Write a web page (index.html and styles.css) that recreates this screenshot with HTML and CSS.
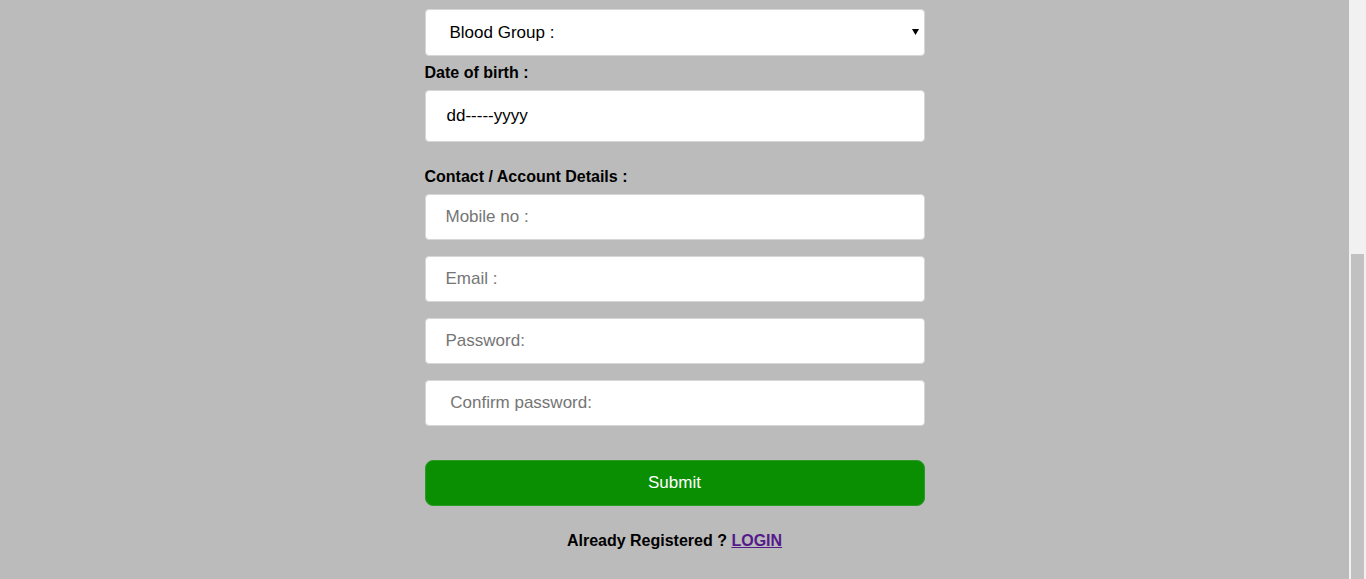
FILE: index.html
```html
<!DOCTYPE html>
<html>
<head>
<meta charset="utf-8">
<title>Register</title>
<link rel="stylesheet" href="styles.css">
</head>
<body>
<div class="page">
  <main class="main">
    <form class="form">
      <div class="select-wrap">
        <div class="select">Blood Group :</div>
        <svg class="caret" width="7" height="6" viewBox="0 0 7 6"><path d="M0 0H7L3.5 6Z" fill="#000"/></svg>
      </div>
      <label class="label label-dob">Date of birth :</label>
      <input class="field field-date" type="text" value="dd-----yyyy">
      <label class="label label-contact">Contact / Account Details :</label>
      <div class="fields">
        <input class="field" type="text" placeholder="Mobile no :">
        <input class="field" type="text" placeholder="Email :">
        <input class="field" type="text" placeholder="Password:">
        <input class="field" type="text" placeholder=" Confirm password:">
      </div>
      <button class="submit" type="button">Submit</button>
      <p class="login">Already Registered ? <a href="#" class="login-link">LOGIN</a></p>
    </form>
  </main>
  <div class="scrollbar"><div class="thumb"></div></div>
</div>
</body>
</html>
```
FILE: styles.css
```css
html, body {
  margin: 0;
  padding: 0;
  height: 579px;
  overflow: hidden;
}
body {
  font-family: "Liberation Sans", Arial, sans-serif;
  background: #bbbbbb;
}
.page {
  display: flex;
  height: 579px;
}
.main {
  flex: 1;
  display: flex;
  justify-content: center;
}
.form {
  width: 500px;
  padding-top: 9px;
  display: flex;
  flex-direction: column;
}
.select-wrap {
  position: relative;
}
.select {
  box-sizing: border-box;
  height: 47px;
  background: #fff;
  border: 1px solid #d6d6d6;
  border-radius: 4px;
  padding-left: 24px;
  font-size: 17px;
  line-height: 45px;
  color: #000;
}
.caret {
  position: absolute;
  right: 6px;
  top: 20px;
}
.label {
  display: block;
  font-weight: bold;
  font-size: 16px;
  line-height: 18px;
  color: #000;
}
.label-dob {
  margin: 8px 0 8px;
}
.label-contact {
  margin: 26px 0 8px;
}
.field {
  box-sizing: border-box;
  width: 100%;
  height: 46px;
  margin: 0;
  background: #fff;
  border: 1px solid #d6d6d6;
  border-radius: 4px;
  padding: 0 0 0 20px;
  font-family: "Liberation Sans", Arial, sans-serif;
  font-size: 17px;
  color: #000;
  outline: none;
}
.field::placeholder {
  color: #757575;
}
.field-date {
  height: 52px;
  padding-left: 21px;
}
.fields {
  display: flex;
  flex-direction: column;
  gap: 16px;
}
.submit {
  box-sizing: border-box;
  margin-top: 34px;
  height: 46px;
  width: 100%;
  background: #0a8f02;
  border: 1px solid #2d9a28;
  border-radius: 8px;
  color: #fff;
  font-family: "Liberation Sans", Arial, sans-serif;
  font-size: 17px;
  cursor: pointer;
}
.login {
  margin: 26px 0 0;
  text-align: center;
  font-weight: bold;
  font-size: 16px;
  line-height: 18px;
  color: #000;
}
.login-link {
  color: #551a8b;
  text-decoration: underline;
}
.scrollbar {
  width: 17px;
  background: #f1f1f1;
  padding-top: 254px;
  box-sizing: border-box;
  display: flex;
  justify-content: center;
}
.thumb {
  width: 13px;
  height: 100%;
  background: #c1c1c1;
}
```
